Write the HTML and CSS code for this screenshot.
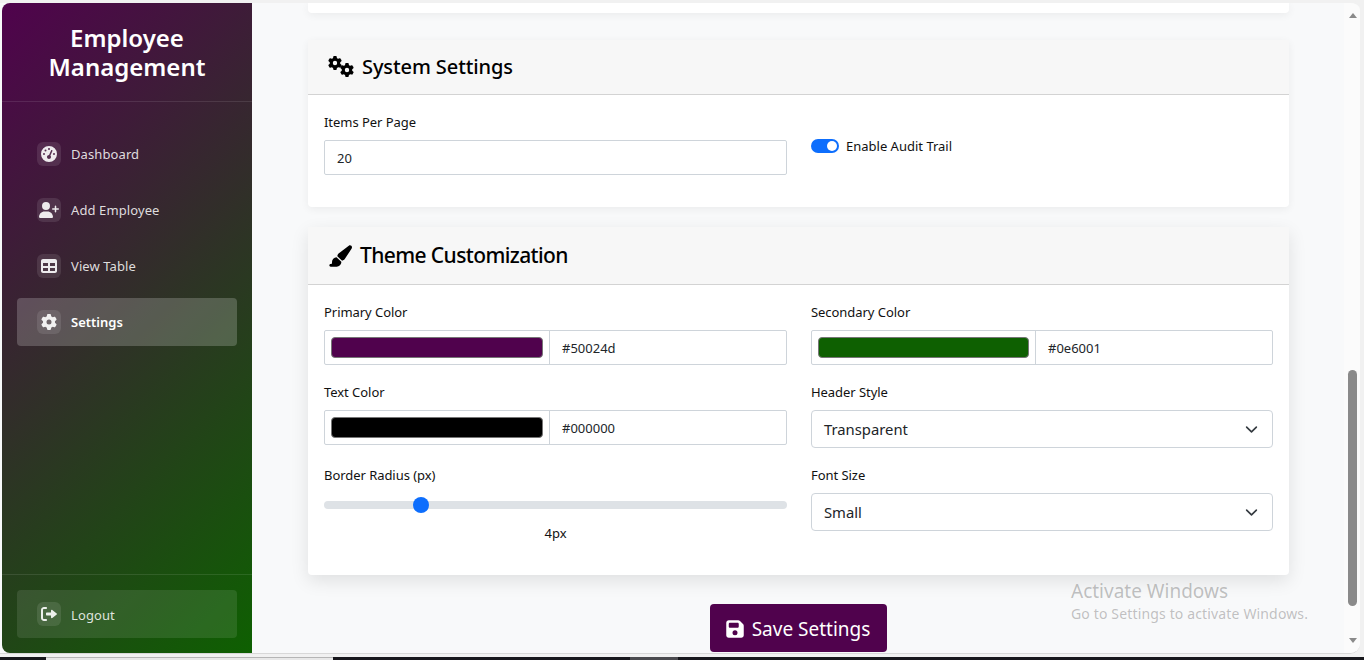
FILE: index.html
```html
<!DOCTYPE html>
<html lang="en">
<head>
    <meta charset="UTF-8">
    <title>Settings</title>
    <link rel="stylesheet" href="styles.css">
</head>
<body>
    <div class="window">
        <aside class="sidebar">
            <div class="brand">Employee Management</div>
            <nav class="nav">
                <a class="nav-item"><span class="nav-icon"><svg viewBox="0 0 512 512"><path d="M0 256a256 256 0 1 1 512 0A256 256 0 1 1 0 256zM288 96a32 32 0 1 0 -64 0 32 32 0 1 0 64 0zM256 416c35.3 0 64-28.7 64-64c0-17.4-6.9-33.1-18.1-44.6L366 161.7c5.3-12.1-.2-26.3-12.3-31.6s-26.3 .2-31.600 12.300L257.900 288c-.6 0-1.300 0-1.900 0c-35.300 0-64 28.700-64 64s28.700 64 64 64zM176 144a32 32 0 1 0 -64 0 32 32 0 1 0 64 0zM96 288a32 32 0 1 0 0-64 32 32 0 1 0 0 64zm352-32a32 32 0 1 0 -64 0 32 32 0 1 0 64 0z"/></svg></span>Dashboard</a>
                <a class="nav-item"><span class="nav-icon"><svg class="icon-wide" viewBox="0 0 640 512"><path d="M224 256a128 128 0 1 0 0-256 128 128 0 0 0 0 256zm-45 48C79 304 0 383 0 482c0 17 13 30 30 30h388c17 0 30-13 30-30 0-99-79-178-178-178h-92zM504 312v-64h-64a24 24 0 0 1 0-48h64v-64a24 24 0 0 1 48 0v64h64a24 24 0 0 1 0 48h-64v64a24 24 0 0 1-48 0z"/></svg></span>Add Employee</a>
                <a class="nav-item"><span class="nav-icon"><svg viewBox="0 0 512 512"><path d="M64 32C29 32 0 61 0 96v320c0 35 29 64 64 64h384c35 0 64-29 64-64V96c0-35-29-64-64-64H64zm0 128h160v96H64v-96zm224 0h160v96H288v-96zM64 320h160v96H64v-96zm224 0h160v96H288v-96z"/></svg></span>View Table</a>
                <a class="nav-item active"><span class="nav-icon"><svg viewBox="0 0 512 512"><use href="#gear"/></svg></span>Settings</a>
            </nav>
            <div class="sidebar-foot">
                <a class="nav-item logout"><span class="nav-icon"><svg viewBox="0 0 512 512"><path d="M502 273c13-9 13-27 0-36L362 125c-15-12-42-3-42 18v65H192c-18 0-32 14-32 32v32c0 18 14 32 32 32h128v65c0 21 27 30 42 18l140-114zM160 96c18 0 32-14 32-32s-14-32-32-32H96C43 32 0 75 0 128v256c0 53 43 96 96 96h64c18 0 32-14 32-32s-14-32-32-32H96c-18 0-32-14-32-32V128c0-18 14-32 32-32h64z"/></svg></span><span class="logout-text">Logout</span></a>
            </div>
        </aside>

        <main class="main">
            <div class="card card-cut"></div>

            <section class="card">
                <h2 class="card-head system-head">
                    <svg class="gears" viewBox="0 0 27 21"><use href="#gear" transform="translate(1 0) scale(.0273)"/><use href="#gear" transform="translate(13 7) scale(.0273)"/></svg>
                    System Settings
                </h2>
                <div class="card-body grid">
                    <div class="field">
                        <label class="field-label">Items Per Page</label>
                        <div class="input">20</div>
                    </div>
                    <div class="switch-row">
                        <span class="switch"></span>
                        <span class="switch-label">Enable Audit Trail</span>
                    </div>
                </div>
            </section>

            <section class="card card-raised">
                <h2 class="card-head theme-head">
                    <svg class="brush" viewBox="0 0 576 512"><path d="M339.300 367.100c27.300-3.900 51.900-19.400 67.200-42.900L568.200 74.100c12.600-19.500 9.400-45.300-7.600-61.200S517.700-4.400 499.100 9.600L262.400 187.200c-24 18-38.200 46.100-38.400 76.100L339.300 367.100zm-19.600 25.400l-116-104.400C143.900 290.300 96 339.600 96 400c0 3.900 .2 7.800 .6 11.600C98.400 429.100 86.400 448 68.800 448H64c-17.700 0-32 14.300-32 32s14.300 32 32 32H208c61.900 0 112-50.100 112-112c0-2.500-.1-5-.2-7.500z"/></svg>
                    Theme Customization
                </h2>
                <div class="card-body grid">
                    <div class="field">
                        <label class="field-label">Primary Color</label>
                        <div class="color-input">
                            <span class="swatch-wrap"><span class="swatch swatch-primary"></span></span>
                            <span class="color-value">#50024d</span>
                        </div>
                    </div>
                    <div class="field">
                        <label class="field-label">Secondary Color</label>
                        <div class="color-input">
                            <span class="swatch-wrap swatch-wrap-narrow"><span class="swatch swatch-secondary"></span></span>
                            <span class="color-value">#0e6001</span>
                        </div>
                    </div>
                    <div class="field">
                        <label class="field-label">Text Color</label>
                        <div class="color-input">
                            <span class="swatch-wrap"><span class="swatch swatch-text"></span></span>
                            <span class="color-value">#000000</span>
                        </div>
                    </div>
                    <div class="field">
                        <label class="field-label">Header Style</label>
                        <div class="select">Transparent<svg viewBox="0 0 16 16"><path d="M2 5l6 6 6-6"/></svg></div>
                    </div>
                    <div class="field">
                        <label class="field-label">Border Radius (px)</label>
                        <div class="range"><span class="range-thumb"></span></div>
                        <div class="range-value">4px</div>
                    </div>
                    <div class="field">
                        <label class="field-label">Font Size</label>
                        <div class="select">Small<svg viewBox="0 0 16 16"><path d="M2 5l6 6 6-6"/></svg></div>
                    </div>
                </div>
            </section>

            <div class="actions">
                <button class="save-btn"><svg viewBox="0 0 448 512"><path d="M64 32C29 32 0 61 0 96v320c0 35 29 64 64 64h320c35 0 64-29 64-64V173c0-17-7-33-19-45l-77-77c-12-12-28-19-45-19H64zm0 96c0-18 14-32 32-32h192c18 0 32 14 32 32v64c0 18-14 32-32 32H96c-18 0-32-14-32-32v-64zm160 160a64 64 0 1 1 0 128 64 64 0 0 1 0-128z"/></svg>Save Settings</button>
            </div>
        </main>

        <div class="scrollbar">
            <span class="arrow arrow-up"></span>
            <div class="scroll-track"><span class="scroll-thumb"></span></div>
            <span class="arrow arrow-down"></span>
        </div>

        <div class="activate">
            <div class="activate-title">Activate Windows</div>
            <div class="activate-sub">Go to Settings to activate Windows.</div>
        </div>
    </div>

    <div class="taskbar">
        <span class="task-a"></span>
        <span class="task-light"></span>
        <span class="task-b"></span>
        <span class="task-gray"></span>
    </div>

    <svg class="defs" width="0" height="0">
        <defs>
            <path id="gear" d="M495.900 166.600c3.200 8.700.5 18.400-6.400 24.600l-43.300 39.400c1.100 8.300 1.700 16.800 1.700 25.400s-.6 17.100-1.700 25.400l43.300 39.400c6.900 6.200 9.600 15.900 6.400 24.600-4.400 11.900-9.700 23.300-15.800 34.300l-4.700 8.100c-6.600 11-14 21.400-22.100 31.200-5.900 7.200-15.700 9.600-24.500 6.800l-55.700-17.700c-13.400 10.300-28.200 18.900-44 25.400l-12.500 57.100c-2 9.100-9 16.300-18.200 17.800-13.800 2.300-28 3.500-42.500 3.500s-28.700-1.200-42.500-3.500c-9.200-1.500-16.200-8.700-18.200-17.800l-12.500-57.100c-15.800-6.500-30.600-15.100-44-25.400l-55.600 17.800c-8.800 2.800-18.600.3-24.500-6.800-8.100-9.800-15.500-20.200-22.100-31.200l-4.700-8.100c-6.100-11-11.400-22.400-15.800-34.300-3.200-8.700-.5-18.400 6.400-24.600l43.300-39.400c-1.100-8.400-1.700-16.900-1.700-25.500s.6-17.100 1.700-25.400l-43.300-39.400c-6.900-6.200-9.600-15.900-6.400-24.600 4.400-11.900 9.700-23.300 15.800-34.300l4.700-8.100c6.600-11 14-21.400 22.100-31.200 5.900-7.200 15.700-9.600 24.500-6.800l55.700 17.700c13.400-10.300 28.200-18.900 44-25.400l12.500-57.100c2-9.100 9-16.300 18.200-17.800C227.300 1.200 241.500 0 256 0s28.700 1.200 42.500 3.500c9.200 1.500 16.200 8.700 18.200 17.800l12.500 57.100c15.800 6.500 30.600 15.100 44 25.400l55.700-17.700c8.800-2.800 18.600-.3 24.500 6.800 8.100 9.800 15.500 20.200 22.100 31.200l4.700 8.100c6.100 11 11.400 22.400 15.800 34.300zM256 336a80 80 0 1 0 0-160 80 80 0 0 0 0 160z"/>
        </defs>
    </svg>
</body>
</html>
```

FILE: styles.css
```css
* {
    box-sizing: border-box;
}

html, body {
    height: 100%;
    margin: 0;
    overflow: hidden;
}

body {
    font-family: "Noto Sans", "Open Sans", Arial, sans-serif;
    font-size: 13px;
    line-height: 21px;
    color: #212529;
    background-color: #f1f1f1;
    display: flex;
    flex-direction: column;
}

.defs {
    display: none;
}

/* browser window */
.window {
    position: relative;
    display: flex;
    width: 1360px;
    height: 654px;
    flex: none;
    background-color: #f8f9fa;
    border-top: 3px solid #f1f1f1;
    border-bottom: 1px solid #d8d8d8;
    border-radius: 0 10px 10px 0;
    overflow: hidden;
}

.taskbar {
    display: flex;
    flex: 1;
    margin-top: 3px;
    background-color: #17171c;
}

.task-a {
    width: 46px;
}

.task-light {
    width: 287px;
    background-color: #e8e8e8;
    border-top: 1px solid #b5b5b5;
}

.task-b {
    width: 297px;
}

.task-gray {
    width: 48px;
    background-color: #4a4a4e;
}

/* sidebar */
.sidebar {
    display: flex;
    flex-direction: column;
    flex: none;
    width: 250px;
    margin-left: 2px;
    color: #fff;
    background: linear-gradient(135deg, #50024d, #0e6001);
    border-radius: 8px 0 0 8px;
}

.brand {
    height: 99px;
    padding: 20px 30px 0;
    font-size: 24px;
    line-height: 29px;
    font-weight: 600;
    text-align: center;
    border-bottom: 1px solid rgba(255,255,255,0.1);
}

.nav {
    flex: 1;
    padding: 28px 15px 0;
}

.nav-item {
    display: flex;
    align-items: center;
    gap: 10px;
    height: 48px;
    margin-bottom: 8px;
    padding-left: 20px;
    border-radius: 4px;
    letter-spacing: 0.1px;
    color: rgba(255,255,255,0.85);
}

.nav-item.active {
    color: #fff;
    font-weight: 600;
    letter-spacing: 0;
    background-color: rgba(255,255,255,0.2);
}

.nav-icon {
    display: flex;
    align-items: center;
    justify-content: center;
    width: 24px;
    height: 24px;
    border-radius: 6px;
    background-color: rgba(255,255,255,0.1);
}

.nav-icon svg {
    flex: none;
    width: 16px;
    height: 16px;
    fill: rgba(255,255,255,0.9);
}

.nav-icon .icon-wide {
    width: 20px;
}

.sidebar-foot {
    height: 79px;
    padding: 15px;
    border-top: 1px solid rgba(255,255,255,0.1);
}

.logout {
    margin: 0;
    background-color: rgba(255,255,255,0.1);
}

.logout-text {
    padding-top: 2px;
}

/* main column */
.main {
    flex: 1;
    min-width: 0;
    padding: 0 55px 0 56px;
}

.card {
    margin-bottom: 20px;
    background-color: #fff;
    border-radius: 4px;
    box-shadow: 0 2px 8px rgba(0,0,0,0.06);
}

.card-cut {
    height: 10px;
    margin-bottom: 27px;
    border-radius: 0 0 4px 4px;
}

.card-raised {
    margin-bottom: 29px;
    box-shadow: 0 6px 18px rgba(0,0,0,0.1);
}

.card-head {
    display: flex;
    align-items: center;
    margin: 0;
    color: #000;
    font-weight: 500;
    background-color: #f7f7f7;
    border-bottom: 1px solid #d3d3d3;
}

.system-head {
    height: 55px;
    gap: 8px;
    padding: 0 0 2px 19px;
    font-size: 20px;
    letter-spacing: -0.1px;
}

.theme-head {
    height: 58px;
    gap: 8px;
    padding-left: 20px;
    font-size: 21px;
    letter-spacing: -0.6px;
}

.gears {
    width: 27px;
    height: 21px;
    fill: #000;
}

.brush {
    width: 24px;
    height: 22px;
    fill: #000;
}

.card-body {
    padding: 16px 16px 0;
}

.grid {
    display: grid;
    grid-template-columns: 463px 462px;
    column-gap: 24px;
    padding-bottom: 16px;
}

.field {
    margin-bottom: 16px;
}

.field-label {
    display: block;
    height: 21px;
    margin-bottom: 8px;
    padding-top: 1px;
    color: #111;
    letter-spacing: -0.05px;
}

.input {
    height: 35px;
    padding: 7px 12px 0;
    background-color: #fff;
    border: 1px solid #ced4da;
    border-radius: 2px;
}

.switch-row {
    display: flex;
    align-items: center;
    gap: 7px;
    height: 21px;
    margin-top: 24px;
    color: #111;
}

.switch-label {
    padding-top: 2px;
}

.switch {
    position: relative;
    width: 28px;
    height: 14px;
    border-radius: 7px;
    background-color: #0d6efd;
}

.switch::after {
    content: "";
    position: absolute;
    top: 2px;
    right: 2px;
    width: 10px;
    height: 10px;
    border-radius: 50%;
    background-color: #fff;
}

.color-input {
    display: flex;
    height: 35px;
    border: 1px solid #ced4da;
    border-radius: 2px;
    background-color: #fff;
}

.swatch-wrap {
    display: flex;
    flex: none;
    width: 225px;
    padding: 6px;
    border-right: 1px solid #ced4da;
}

.swatch-wrap-narrow {
    width: 224px;
}

.swatch {
    flex: 1;
    border-radius: 4px;
    border: 1px solid #767676;
}

.swatch-primary {
    background-color: #50024d;
}

.swatch-secondary {
    background-color: #0e6001;
}

.swatch-text {
    background-color: #000;
}

.color-value {
    padding: 7px 12px 0;
}

.select {
    display: flex;
    align-items: center;
    justify-content: space-between;
    height: 38px;
    padding: 0 14px 0 12px;
    font-size: 14.8px;
    background-color: #fff;
    border: 1px solid #ced4da;
    border-radius: 4px;
}

.select svg {
    width: 13px;
    height: 13px;
    fill: none;
    stroke: #343a40;
    stroke-width: 2;
    stroke-linecap: round;
    stroke-linejoin: round;
}

.range {
    position: relative;
    height: 8px;
    margin-top: 16px;
    border-radius: 4px;
    background-color: #dee2e6;
}

.range-thumb {
    position: absolute;
    top: -4px;
    left: 89px;
    width: 16px;
    height: 16px;
    border-radius: 50%;
    background-color: #0d6efd;
}

.range-value {
    height: 21px;
    margin-top: 13px;
    padding-top: 1px;
    text-align: center;
    color: #111;
}

.actions {
    text-align: center;
}

.save-btn {
    display: inline-flex;
    align-items: center;
    gap: 8px;
    height: 48px;
    padding: 2px 17px 0 16px;
    font-family: inherit;
    font-size: 19px;
    color: #fff;
    background-color: #50024d;
    border: none;
    border-radius: 4px;
}

.save-btn svg {
    width: 18px;
    height: 20px;
    fill: #fff;
}

/* page scrollbar */
.scrollbar {
    display: flex;
    flex-direction: column;
    align-items: center;
    flex: none;
    width: 16px;
    padding-left: 1px;
    background-color: #fbfbfb;
}

.arrow {
    flex: none;
    width: 0;
    height: 0;
    margin: 10px 0;
    border-left: 4.5px solid transparent;
    border-right: 4.5px solid transparent;
}

.arrow-up {
    border-bottom: 5px solid #8a8a8a;
}

.arrow-down {
    border-top: 5px solid #8a8a8a;
}

.scroll-track {
    flex: 1;
    display: flex;
    flex-direction: column;
    justify-content: flex-end;
    width: 100%;
    padding: 0 3px 22px;
}

.scroll-thumb {
    height: 236px;
    border-radius: 5px;
    background-color: #8a8a8a;
}

/* windows watermark, sits over the page */
.activate {
    position: absolute;
    left: 1071px;
    top: 576px;
    color: rgba(120,120,120,0.45);
    pointer-events: none;
}

.activate-title {
    font-size: 19px;
    line-height: 24px;
}

.activate-sub {
    font-size: 14px;
    line-height: 22px;
    letter-spacing: 0.15px;
}
```
